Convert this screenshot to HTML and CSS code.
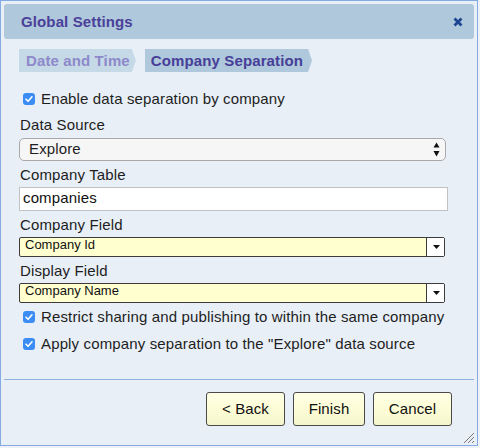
FILE: index.html
```html
<!DOCTYPE html>
<html>
<head>
<meta charset="utf-8">
<link rel="stylesheet" href="styles.css">
</head>
<body>
<div class="dialog">
  <div class="titlebar">
    <span class="title">Global Settings</span>
    <svg class="close" width="10" height="10" viewBox="0 0 10 10"><path d="M1.5 1.5 L8.5 8.5 M8.5 1.5 L1.5 8.5" stroke="#1d4592" stroke-width="2.8" fill="none"/></svg>
  </div>
  <div class="content">
    <div class="steps">
      <div class="step done">Date and Time</div>
      <div class="step active">Company Separation</div>
    </div>
    <div class="form">
      <div class="check row-first"><span class="box"><svg width="12" height="12" viewBox="0 0 12 12"><path d="M3 6.2 L5.1 8.3 L9 3.8" stroke="#fff" stroke-width="1.6" fill="none" stroke-linecap="round" stroke-linejoin="round"/></svg></span>Enable data separation by company</div>
      <div class="label label-first">Data Source</div>
      <div class="select"><span>Explore</span><svg width="7" height="15" viewBox="0 0 7 15"><path d="M3.5 0.5 L6.5 5.5 L0.5 5.5 Z M3.5 14.5 L6.5 9 L0.5 9 Z" fill="#111"/></svg></div>
      <div class="label">Company Table</div>
      <div class="input">companies</div>
      <div class="label">Company Field</div>
      <div class="combo"><span class="combo-text">Company Id</span><span class="combo-btn"><svg width="7" height="4" viewBox="0 0 7 4"><path d="M0 0 L7 0 L3.5 4 Z" fill="#111"/></svg></span></div>
      <div class="label">Display Field</div>
      <div class="combo"><span class="combo-text">Company Name</span><span class="combo-btn"><svg width="7" height="4" viewBox="0 0 7 4"><path d="M0 0 L7 0 L3.5 4 Z" fill="#111"/></svg></span></div>
      <div class="check row-second"><span class="box"><svg width="12" height="12" viewBox="0 0 12 12"><path d="M3 6.2 L5.1 8.3 L9 3.8" stroke="#fff" stroke-width="1.6" fill="none" stroke-linecap="round" stroke-linejoin="round"/></svg></span>Restrict sharing and publishing to within the same company</div>
      <div class="check row-third"><span class="box"><svg width="12" height="12" viewBox="0 0 12 12"><path d="M3 6.2 L5.1 8.3 L9 3.8" stroke="#fff" stroke-width="1.6" fill="none" stroke-linecap="round" stroke-linejoin="round"/></svg></span>Apply company separation to the "Explore" data source</div>
    </div>
  </div>
  <div class="footer">
    <button class="btn btn-back">&lt; Back</button>
    <button class="btn btn-finish">Finish</button>
    <button class="btn btn-cancel">Cancel</button>
  </div>
  <svg class="grip" width="11" height="10" viewBox="0 0 11 10"><path d="M1 10 L11 0 M5 10 L11 4 M9 10 L11 8" stroke="#777" stroke-width="1" fill="none"/></svg>
</div>
</body>
</html>
```
FILE: styles.css
```css
html, body {
  margin: 0;
  padding: 0;
}
body {
  background: #eef2f6;
  width: 480px;
  height: 448px;
  font-family: "Liberation Sans", Arial, Helvetica, sans-serif;
  color: #1e1e1e;
}
.dialog {
  position: relative;
  box-sizing: border-box;
  width: 478px;
  height: 446px;
  border: 1px solid #84aae4;
  background: #e8eff7;
  padding: 3px 3px 0 3px;
  display: flex;
  flex-direction: column;
}
.titlebar {
  height: 35px;
  background: #b0c8dc;
  border-radius: 3px;
  display: flex;
  align-items: center;
  justify-content: space-between;
  padding: 0 11px 0 17px;
}
.title {
  font-size: 15px;
  font-weight: bold;
  line-height: 35px;
  letter-spacing: 0.12px;
  color: #4a3f99;
}
.close {
  display: block;
  margin-top: 1px;
}
.content {
  flex: 1;
  padding: 0 27px 0 15px;
}
.steps {
  margin-top: 10px;
  display: flex;
  gap: 9px;
  height: 23px;
}
.step {
  font-size: 15px;
  font-weight: bold;
  line-height: 23px;
  letter-spacing: 0.12px;
  padding: 0 8px 0 6px;
  clip-path: polygon(0 0, calc(100% - 4px) 0, 100% 50%, calc(100% - 4px) 100%, 0 100%);
}
.step.done {
  background: #c5d9e7;
  color: #8d89ca;
  padding-left: 7px;
  padding-right: 6px;
}
.step.active {
  background: #b0c8dc;
  color: #463e98;
  padding-right: 9px;
}
.form {
  display: flex;
  flex-direction: column;
}
.check {
  display: flex;
  align-items: center;
  height: 18px;
  font-size: 15px;
  line-height: 18px;
  letter-spacing: 0.14px;
  white-space: nowrap;
}
.box {
  width: 12px;
  height: 12px;
  border-radius: 3px;
  background: #3b8cf4;
  margin: 0 6px 0 4px;
  display: flex;
}
.box svg {
  display: block;
}
.row-first {
  margin-top: 18px;
}
.row-second {
  margin-top: 5px;
}
.row-third {
  margin-top: 9px;
}
.label {
  font-size: 15px;
  line-height: 18px;
  letter-spacing: 0.14px;
  height: 18px;
  margin-top: 5px;
  padding-left: 1px;
}
.label-first {
  margin-top: 8px;
}
.select {
  margin-top: 4px;
  box-sizing: border-box;
  width: 427px;
  height: 23px;
  border: 1px solid #a9a9a9;
  border-radius: 5px;
  background: #f6f6f6;
  display: flex;
  align-items: center;
  justify-content: space-between;
  padding: 0 5px 0 9px;
  font-size: 15px;
  letter-spacing: 0.14px;
}
.select span {
  line-height: 19px;
  padding-bottom: 2px;
}
.select svg {
  display: block;
}
.input {
  margin-top: 3px;
  box-sizing: border-box;
  width: 429px;
  height: 24px;
  border: 1px solid #c2c2c2;
  background: #ffffff;
  padding: 0 3px 2px 3px;
  font-size: 15px;
  line-height: 20px;
  letter-spacing: 0.14px;
  color: #111;
}
.combo {
  margin-top: 3px;
  box-sizing: border-box;
  width: 426px;
  height: 20px;
  border: 1px solid #3c3c3c;
  border-radius: 2px;
  background: #ffffcf;
  display: flex;
}
.combo-text {
  flex: 1;
  font-size: 13px;
  line-height: 14px;
  padding: 0 0 0 5px;
  color: #111;
}
.combo-btn {
  width: 17px;
  border-left: 1px solid #3c3c3c;
  background: #ffffff;
  display: flex;
  align-items: center;
  justify-content: center;
}
.combo-btn svg {
  display: block;
  margin-left: 1px;
}
.footer {
  border-top: 1px solid #8eb1e2;
  padding: 12px 22px 19px 0;
  display: flex;
  justify-content: flex-end;
  gap: 7px;
}
.btn {
  box-sizing: border-box;
  height: 34px;
  border: 1px solid #4a4a4a;
  border-radius: 3px;
  background: linear-gradient(#ffffe6 0%, #fdfdd8 45%, #f6f6cc 100%);
  font-family: "Liberation Sans", Arial, Helvetica, sans-serif;
  font-size: 15px;
  line-height: 31px;
  letter-spacing: 0.12px;
  padding: 0 0 1px 0;
  color: #111;
  text-align: center;
}
.btn-back {
  width: 79px;
}
.btn-finish {
  width: 72px;
  margin-left: 1px;
}
.btn-cancel {
  width: 79px;
  margin-left: 1px;
}
.grip {
  position: absolute;
  right: 3px;
  bottom: 2px;
  display: block;
}
```
